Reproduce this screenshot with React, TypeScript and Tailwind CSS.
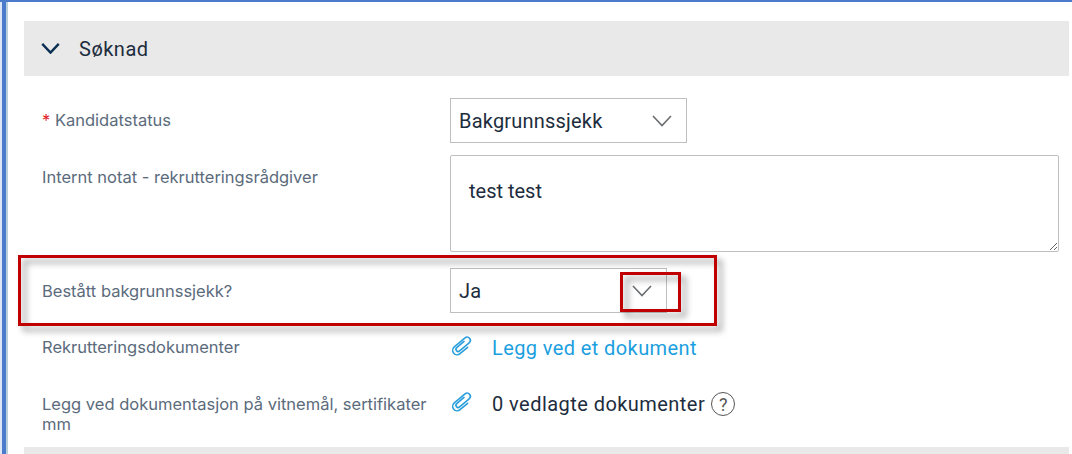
import React from 'react';

const Clip = () => (
  <svg viewBox="0 0 24 24" className="-mt-[4px] h-[24px] w-[24px] shrink-0 text-[#2a9fdc]" fill="none" stroke="currentColor" strokeWidth="1.6" strokeLinecap="round" strokeLinejoin="round">
    <path transform="rotate(-40 12 12)" d="M16.500 9.800H7a2.200 2.200 0 0 0 0 4.400H19.500a3.200 3.200 0 0 0 0-6.400H5.500a4.400 4.400 0 0 0 0 8.800H15.500" />
  </svg>
);

const Chevron = ({ className, strokeWidth }: { className: string; strokeWidth: number }) => (
  <svg viewBox="0 0 20 12" className={className} fill="none" stroke="currentColor" strokeWidth={strokeWidth}>
    <path d="M1 1 10 10.500 19 1" />
  </svg>
);

const Row = ({ label, className, children }: { label: React.ReactNode; className: string; children?: React.ReactNode }) => (
  <div className={`grid grid-cols-[408px_1fr] ${className}`}>
    <div className="pr-[18px] font-['Inter',sans-serif] text-[16.5px] leading-[20px] text-[#5b6b7c]">{label}</div>
    <div>{children}</div>
  </div>
);

const Select = ({ value, width, border }: { value: string; width: string; border: string }) => (
  <div className={`flex h-[45px] items-center justify-between border-[#bfbfbf] pl-[8px] pr-[14px] text-[20px] tracking-[0.2px] text-[#1d2d3e] ${border} ${width}`}>
    <span>{value}</span>
    <Chevron className="h-[12px] w-[20px] text-[#6a6d70]" strokeWidth={1.6} />
  </div>
);

export default function App() {
  return (
    <div className="relative h-[454px] w-[1072px] overflow-hidden border-t-2 border-[#4a7ccb] bg-white font-['Roboto',sans-serif]">
      <div className="absolute bottom-0 left-0 top-0 w-[8px] border-l-2 border-r-2 border-l-[#dce6f4] border-r-[#b8cfdc] bg-[#4a7ccb]" />
      <div className="ml-[24px] mr-[3px] mt-[19px] flex h-[55px] items-center bg-[#e9e9e9] pl-[17px]">
        <Chevron className="h-[11px] w-[19px] text-[#0a2f52]" strokeWidth={2.6} />
        <span className="ml-[19px] text-[20px] tracking-[0.5px] text-[#1d2d3e]">Søknad</span>
      </div>

      <div className="ml-[42px] mr-[13px]">
        <Row className="mt-[22px] h-[45px]" label={<span className="block pt-[12px]"><span className="text-[#e0262b]">*</span> Kandidatstatus</span>}>
          <Select value="Bakgrunnssjekk" width="w-[237px]" border="border-[1.5px]" />
        </Row>
        <Row className="mt-[12px]" label={<span className="block pt-[12px]">Internt notat - rekrutteringsrådgiver</span>}>
          <textarea
            readOnly
            value="test test"
            className="block h-[97px] w-[609px] resize-y rounded-[2px] border border-[#bfbfbf] px-[18px] py-[22px] text-[20px] leading-[26px] text-[#1d2d3e] outline-none"
          />
        </Row>
        <Row className="mt-[16px]" label={<span className="block pt-[13px]">Bestått bakgrunnssjekk?</span>}>
          <Select value="Ja" width="w-[217px]" border="border" />
        </Row>
        <Row className="mt-[23px] h-[38px]" label={<span className="block pt-[1px]">Rekrutteringsdokumenter</span>}>
          <div className="flex items-center gap-[18px] text-[20px] leading-[21px] tracking-[0.4px] text-[#1b9fe0]">
            <Clip />
            <span className="mt-[2px]">Legg ved et dokument</span>
          </div>
        </Row>
        <Row className="mt-[18px]" label={<span className="block pt-[2px]">Legg ved dokumentasjon på vitnemål, sertifikater mm</span>}>
          <div className="flex items-center text-[20px] leading-[21px] tracking-[0.45px] text-[#1d2d3e]">
            <Clip />
            <span className="ml-[18px]">0 vedlagte dokumenter</span>
            <span className="ml-[6px] flex h-[24px] w-[24px] items-center justify-center rounded-full border-[1.5px] border-[#555] text-[18px] tracking-normal text-[#555]">?</span>
          </div>
        </Row>
      </div>

      <div className="absolute bottom-0 left-[24px] right-[3px] h-[7px] bg-[#e9e9e9]" />

      {/* annotation boxes */}
      <div className="absolute left-[18px] top-[253px] h-[71px] w-[699px] border-[3px] border-[#c00000] drop-shadow-[5px_5px_3px_rgba(0,0,0,0.4)]" />
      <div className="absolute left-[620px] top-[270px] h-[40px] w-[61px] border-[3px] border-[#c00000] drop-shadow-[5px_5px_3px_rgba(0,0,0,0.4)]" />
    </div>
  );
}
